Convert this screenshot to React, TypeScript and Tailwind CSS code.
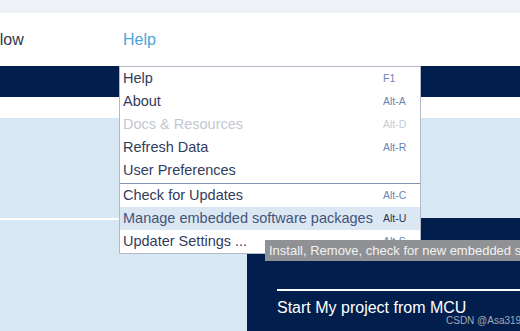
import React from 'react';

type Item = { label: string; key?: string; disabled?: boolean; active?: boolean };

const groupA: Item[] = [
    { label: 'Help', key: 'F1' },
    { label: 'About', key: 'Alt-A' },
    { label: 'Docs & Resources', key: 'Alt-D', disabled: true },
    { label: 'Refresh Data', key: 'Alt-R' },
    { label: 'User Preferences' },
];

const groupB: Item[] = [
    { label: 'Check for Updates', key: 'Alt-C' },
    { label: 'Manage embedded software packages', key: 'Alt-U', active: true },
    { label: 'Updater Settings ...', key: 'Alt-S' },
];

function MenuRow({ item }: { item: Item }) {
    return (
        <div className={`flex items-center h-[23px] pl-[3px] ${item.active ? 'bg-[#dbe7f3]' : ''}`}>
            <span className={`flex-1 text-[14.5px] leading-none whitespace-nowrap ${item.disabled ? 'text-[#c4c8cf]' : item.active ? 'text-[#44557a]' : 'text-[#323c5c]'}`}>
                {item.label}
            </span>
            <span className={`w-[37px] text-[10.5px] leading-none ${item.disabled ? 'text-[#c6cad2]' : item.active ? 'text-[#2d3550]' : 'text-[#6c84b6]'}`}>
                {item.key}
            </span>
        </div>
    );
}

export default function App() {
    return (
        <div className="relative w-[520px] h-[331px] overflow-hidden bg-[#d7e7f4] font-['Liberation_Sans',Arial,sans-serif]">
            <div className="h-[13px] bg-[#eef2f7]"></div>
            <div className="h-[53px] bg-white flex items-center text-[16px]">
                <span className="text-[#33384a] -ml-[10px] w-[133px]">Flow</span>
                <span className="text-[#4aa6d9]">Help</span>
            </div>
            <div className="h-[31px] bg-[#011e4d]"></div>
            <div className="h-[21px] bg-white"></div>

            <div className="flex">
                <div className="flex-1 pt-[100px]">
                    <div className="h-[2px] bg-white"></div>
                </div>
                <div className="w-[273px] h-[113px] mt-[100px] bg-[#011e4d] pl-[30px] pt-[71px]">
                    <div className="h-[2px] bg-white"></div>
                    <div className="mt-[5px] text-white text-[16px]">Start My project from MCU</div>
                </div>
            </div>

            <div className="absolute left-[119px] top-[66px] w-[302px] bg-white border border-[#b3bac6]">
                {groupA.map((item, i) => <MenuRow key={i} item={item} />)}
                <div className="h-px bg-[#8092ad] my-[0.5px]"></div>
                {groupB.map((item, i) => <MenuRow key={i} item={item} />)}
            </div>

            <div className="absolute left-[265px] top-[240px] w-[300px] h-[21px] bg-[#8f9194] text-[#f2f2f2] text-[13px] leading-[21px] pl-[4px] whitespace-nowrap">
                Install, Remove, check for new embedded software packages
            </div>

            <div className="absolute left-[446px] top-[313px] text-[10px] text-[#a3abbb] whitespace-nowrap">CSDN @Asa319</div>
        </div>
    );
}
